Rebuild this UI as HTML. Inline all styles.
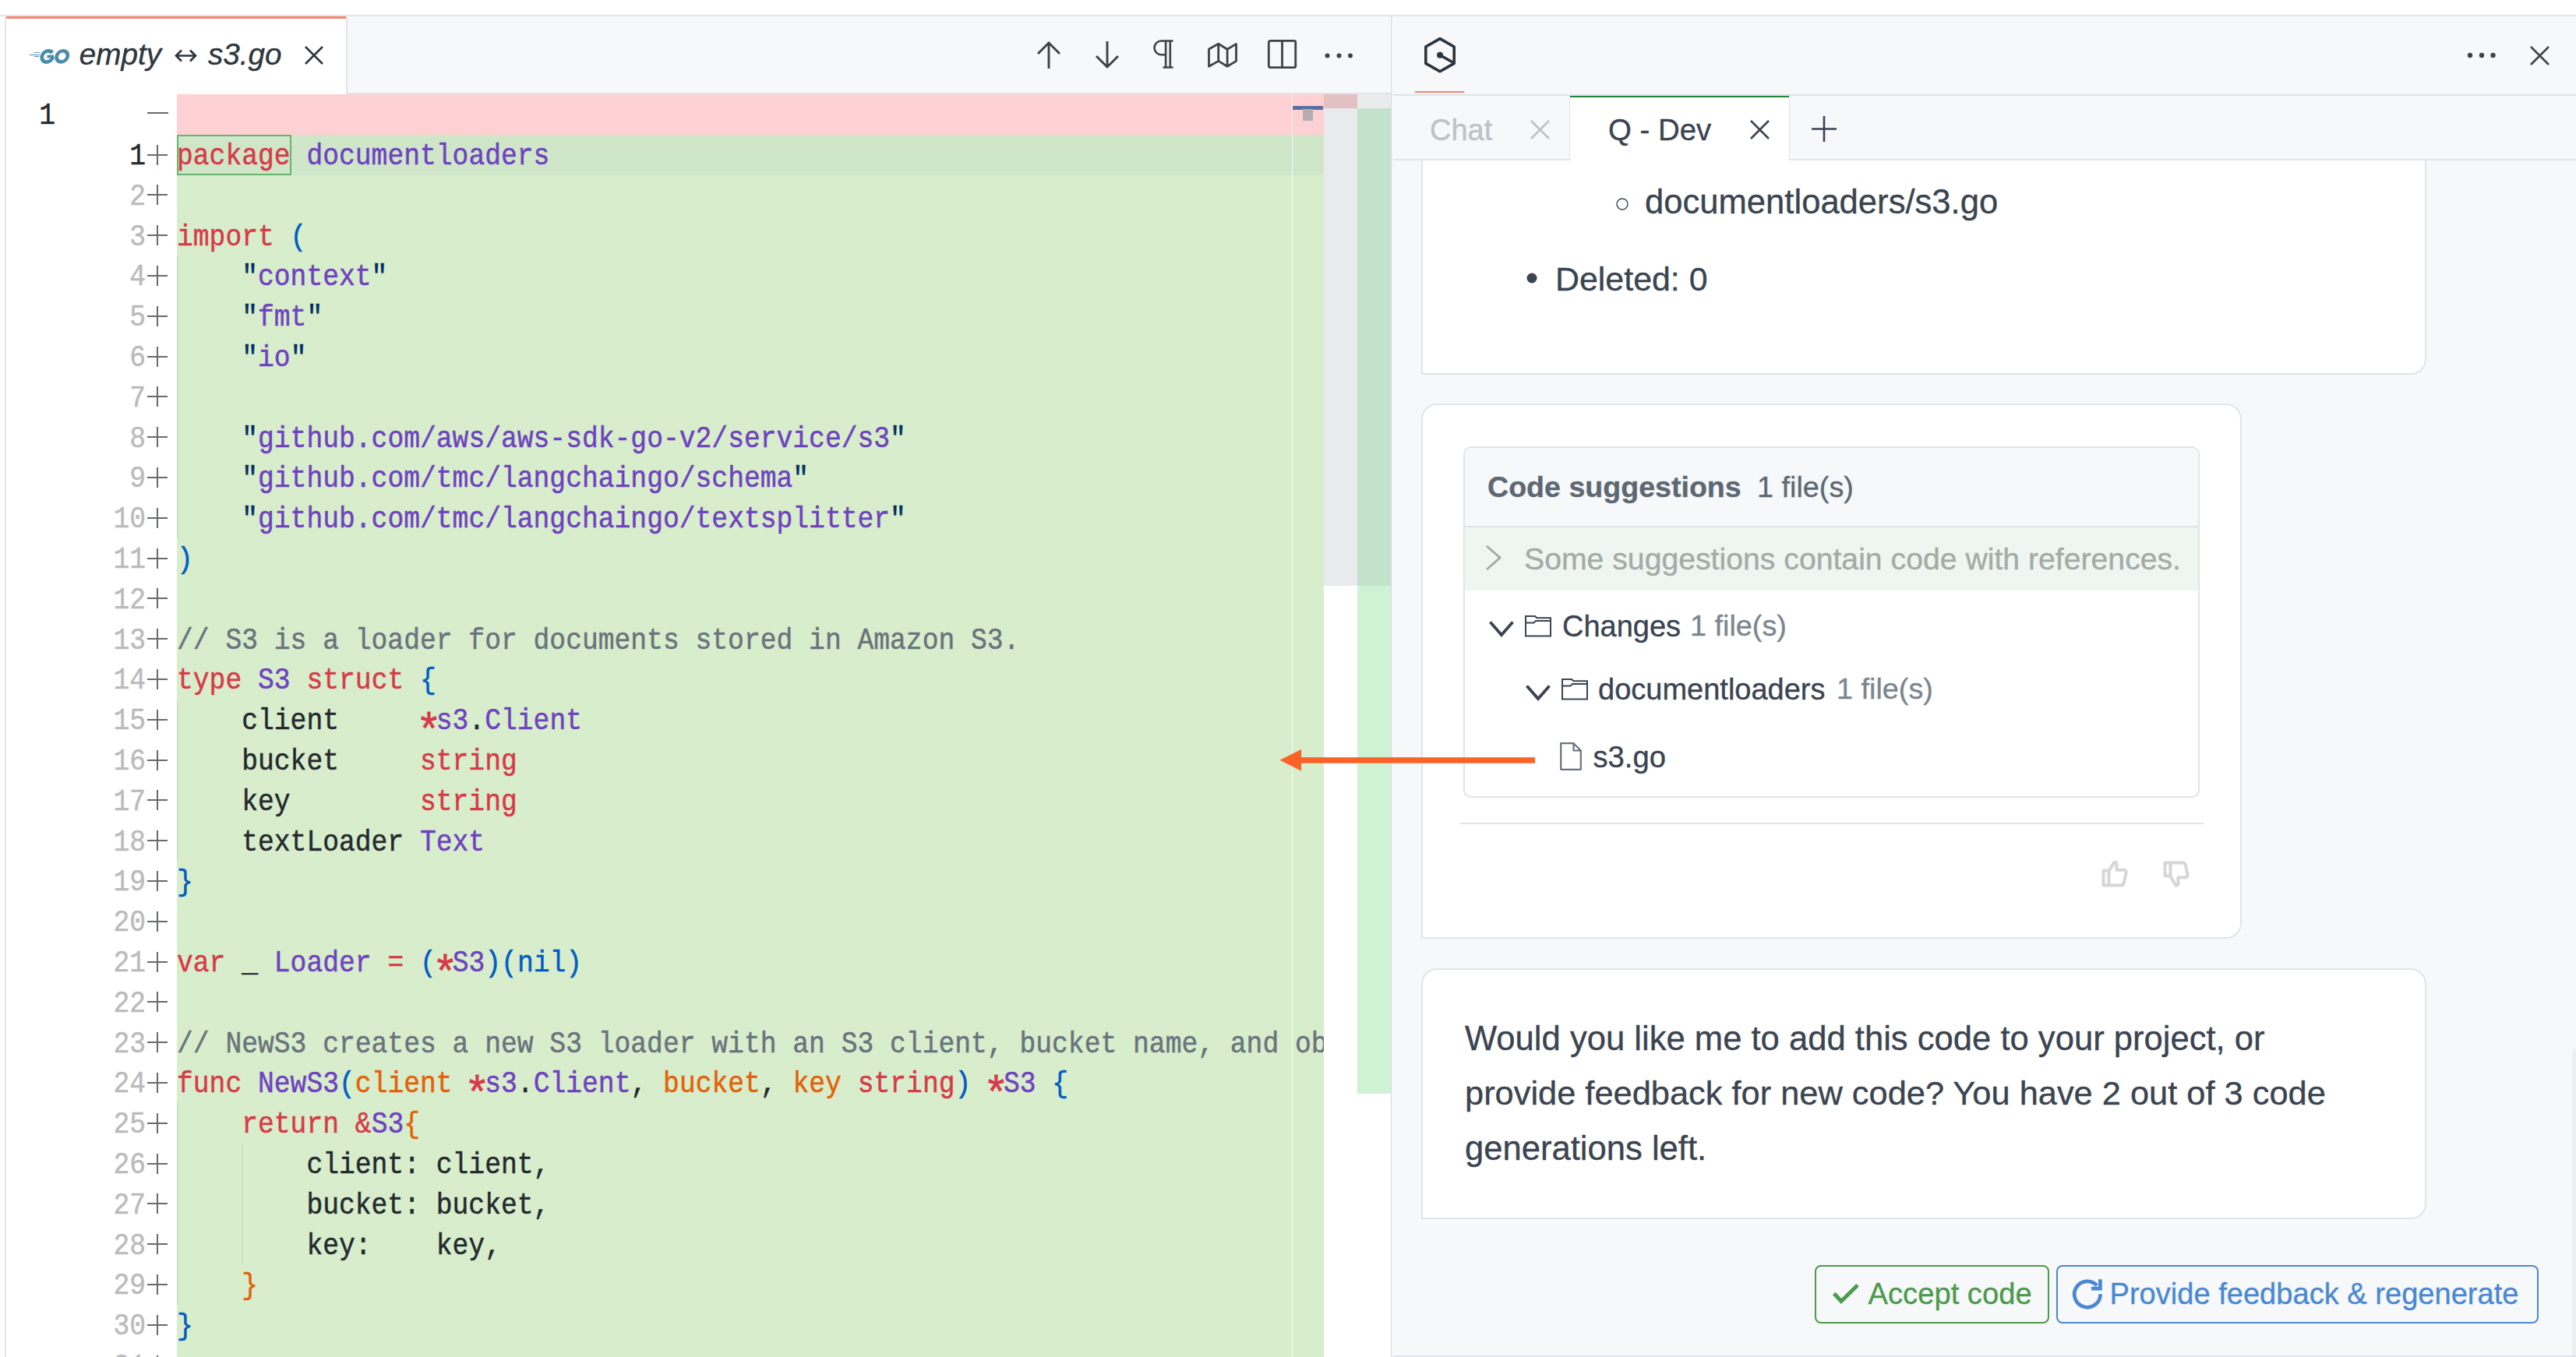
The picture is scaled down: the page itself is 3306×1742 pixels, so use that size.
<!DOCTYPE html>
<html><head><meta charset="utf-8">
<style>
*{box-sizing:border-box}
html,body{margin:0;padding:0}
body{width:3306px;height:1742px;position:relative;overflow:hidden;background:#fff;font-family:"Liberation Sans",sans-serif}
.a{position:absolute}
.cl{position:absolute;left:227px;height:51.8px;line-height:51.8px;font-family:"Liberation Mono",monospace;font-size:34.67px;white-space:pre;color:#24292e;-webkit-text-stroke:0.45px currentColor;transform-origin:0 35px;transform:translateY(3px) scaleY(1.1);}
.ln{position:absolute;height:51.8px;line-height:51.8px;font-family:"Liberation Mono",monospace;font-size:34.67px;white-space:pre;-webkit-text-stroke:0.45px currentColor;transform-origin:0 35px;transform:translateY(3px) scaleY(1.1);}
.t{position:absolute;white-space:pre;line-height:1;-webkit-text-stroke:0.35px currentColor}
.ast{display:inline-block;transform:translate(1px,14px) scale(1.6,1.55)}
svg{position:absolute;overflow:visible}
</style></head><body>

<div class="a" style="left:0;top:19px;width:3306px;height:2px;background:#e1e4e8"></div>
<div class="a" style="left:6px;top:20px;width:2px;height:1722px;background:#e1e4e8"></div>
<div class="a" style="left:8px;top:21px;width:1778px;height:100px;background:#f6f8fa"></div>
<div class="a" style="left:444px;top:119px;width:1342px;height:2px;background:#e1e4e8"></div>
<div class="a" style="left:8px;top:21px;width:436px;height:100px;background:#fff"></div>
<div class="a" style="left:8px;top:21px;width:436px;height:3px;background:#f9826c"></div>
<div class="a" style="left:444px;top:21px;width:2px;height:100px;background:#e1e4e8"></div>
<div class="a" style="left:42.5px;top:67.3px;width:9px;height:1.2px;background:#4a8baa;opacity:.75"></div><div class="a" style="left:38px;top:69.8px;width:13px;height:1.6px;background:#4a8baa"></div><div class="a" style="left:44.3px;top:72px;width:5.7px;height:1.2px;background:#4a8baa"></div>
<svg style="left:38px;top:62px" width="52" height="21" viewBox="0 0 52 21"><g transform="translate(32 10.4) skewX(-10) translate(-32 -10.4)" fill="none" stroke="#4a8baa" stroke-width="4.6"><path d="M28.3 5.8A7.1 7.1 0 1 0 30 11.2"/><circle cx="41.7" cy="10.4" r="7.1"/></g><rect x="22.5" y="8.6" width="8.6" height="3.8" fill="#4a8baa"/></svg>
<div class="t" style="left:101.8px;top:51.2px;font-size:38.7px;color:#2f363d;font-style:italic;">empty</div>
<div class="t" style="left:267.0px;top:51.2px;font-size:38.7px;color:#2f363d;font-style:italic;">s3.go</div>
<svg style="left:224px;top:63px" width="29" height="17" viewBox="0 0 29 17" fill="none" stroke="#2f363d" stroke-width="2.7"><path d="M2 8.5H27M9 1.5L2 8.5L9 15.5M20 1.5L27 8.5L20 15.5"/></svg>
<svg style="left:391px;top:59px" width="24" height="24" viewBox="0 0 24 24"><path d="M1 1L23 23M23 1L1 23" stroke="#2f363d" stroke-width="2.6"/></svg>
<svg style="left:1331px;top:53px" width="30" height="35" viewBox="0 0 30 35" fill="none" stroke="#424242" stroke-width="2.9"><path d="M15 35V2M1 16L15 2L29 16"/></svg>
<svg style="left:1406px;top:53px" width="30" height="35" viewBox="0 0 30 35" fill="none" stroke="#424242" stroke-width="2.9"><path d="M15 0V33M1 19L15 33L29 19"/></svg>
<svg style="left:1480px;top:51px" width="26" height="37" viewBox="0 0 26 37" fill="none" stroke="#424242" stroke-width="2.6"><path d="M15 1.5H25.5M16.1 1.5V35.5M21.8 1.5V35.5M12.5 35.5H25.5M16.1 1.5H10.5C5.5 1.5 1.5 5.5 1.5 10.4S5.5 19.3 10.5 19.3H16.1"/></svg>
<svg style="left:1550px;top:55px" width="38" height="32" viewBox="0 0 38 32" fill="none" stroke="#424242" stroke-width="2.8" stroke-linejoin="round"><path d="M1.5 7.9L13.7 1.2L25.1 8.3L36.5 1.4V23.4L25.1 30.3L13.7 23.4L1.5 30.3Z M13.7 1.2V23.4 M25.1 8.3V30.3"/></svg>
<svg style="left:1627px;top:51px" width="37" height="37" viewBox="0 0 37 37" fill="none" stroke="#424242" stroke-width="2.8"><rect x="1.3" y="1.3" width="34.4" height="34.4" rx="2"/><path d="M18.5 1.3V35.7"/></svg>
<svg style="left:1700px;top:68px" width="38" height="7" viewBox="0 0 38 7" fill="#424242"><circle cx="3.5" cy="3.5" r="3"/><circle cx="18.5" cy="3.5" r="3"/><circle cx="33" cy="3.5" r="3"/></svg>
<div class="a" style="left:227px;top:121.2px;width:1472px;height:51.8px;background:#fdd1d3"></div>
<div class="a" style="left:227px;top:173.0px;width:1472px;height:1742px;background:#d7edcb"></div>
<div class="a" style="left:227px;top:173.0px;width:1472px;height:51.8px;background:#cfe7c8"></div>
<div class="a" style="left:227px;top:172.9px;width:147px;height:51.8px;border:2px solid #66b46e"></div>
<div class="a" style="left:227.0px;top:328.4px;width:2px;height:362.6px;background:rgba(0,0,0,.045)"></div>
<div class="a" style="left:227.0px;top:898.2px;width:2px;height:207.2px;background:rgba(0,0,0,.045)"></div>
<div class="a" style="left:227.0px;top:1416.2px;width:2px;height:259.0px;background:rgba(0,0,0,.045)"></div>
<div class="a" style="left:310.2px;top:1468.0px;width:2px;height:155.4px;background:rgba(0,0,0,.045)"></div>
<div class="ln" style="top:121.20px;left:40px;width:31px;color:#24292e;text-align:right">1</div>
<div class="a" style="left:189px;top:144.20px;width:27px;height:2px;background:#6a6a6a"></div>
<div class="ln" style="top:173.00px;left:100px;width:87px;color:#24292e;text-align:right">1</div>
<div class="a" style="left:189px;top:197.50px;width:26px;height:2px;background:#6a6a6a"></div>
<div class="a" style="left:201px;top:185.50px;width:2px;height:26px;background:#6a6a6a"></div>
<div class="ln" style="top:224.80px;left:100px;width:87px;color:#babbbd;text-align:right">2</div>
<div class="a" style="left:189px;top:249.30px;width:26px;height:2px;background:#6a6a6a"></div>
<div class="a" style="left:201px;top:237.30px;width:2px;height:26px;background:#6a6a6a"></div>
<div class="ln" style="top:276.60px;left:100px;width:87px;color:#babbbd;text-align:right">3</div>
<div class="a" style="left:189px;top:301.10px;width:26px;height:2px;background:#6a6a6a"></div>
<div class="a" style="left:201px;top:289.10px;width:2px;height:26px;background:#6a6a6a"></div>
<div class="ln" style="top:328.40px;left:100px;width:87px;color:#babbbd;text-align:right">4</div>
<div class="a" style="left:189px;top:352.90px;width:26px;height:2px;background:#6a6a6a"></div>
<div class="a" style="left:201px;top:340.90px;width:2px;height:26px;background:#6a6a6a"></div>
<div class="ln" style="top:380.20px;left:100px;width:87px;color:#babbbd;text-align:right">5</div>
<div class="a" style="left:189px;top:404.70px;width:26px;height:2px;background:#6a6a6a"></div>
<div class="a" style="left:201px;top:392.70px;width:2px;height:26px;background:#6a6a6a"></div>
<div class="ln" style="top:432.00px;left:100px;width:87px;color:#babbbd;text-align:right">6</div>
<div class="a" style="left:189px;top:456.50px;width:26px;height:2px;background:#6a6a6a"></div>
<div class="a" style="left:201px;top:444.50px;width:2px;height:26px;background:#6a6a6a"></div>
<div class="ln" style="top:483.80px;left:100px;width:87px;color:#babbbd;text-align:right">7</div>
<div class="a" style="left:189px;top:508.30px;width:26px;height:2px;background:#6a6a6a"></div>
<div class="a" style="left:201px;top:496.30px;width:2px;height:26px;background:#6a6a6a"></div>
<div class="ln" style="top:535.60px;left:100px;width:87px;color:#babbbd;text-align:right">8</div>
<div class="a" style="left:189px;top:560.10px;width:26px;height:2px;background:#6a6a6a"></div>
<div class="a" style="left:201px;top:548.10px;width:2px;height:26px;background:#6a6a6a"></div>
<div class="ln" style="top:587.40px;left:100px;width:87px;color:#babbbd;text-align:right">9</div>
<div class="a" style="left:189px;top:611.90px;width:26px;height:2px;background:#6a6a6a"></div>
<div class="a" style="left:201px;top:599.90px;width:2px;height:26px;background:#6a6a6a"></div>
<div class="ln" style="top:639.20px;left:100px;width:87px;color:#babbbd;text-align:right">10</div>
<div class="a" style="left:189px;top:663.70px;width:26px;height:2px;background:#6a6a6a"></div>
<div class="a" style="left:201px;top:651.70px;width:2px;height:26px;background:#6a6a6a"></div>
<div class="ln" style="top:691.00px;left:100px;width:87px;color:#babbbd;text-align:right">11</div>
<div class="a" style="left:189px;top:715.50px;width:26px;height:2px;background:#6a6a6a"></div>
<div class="a" style="left:201px;top:703.50px;width:2px;height:26px;background:#6a6a6a"></div>
<div class="ln" style="top:742.80px;left:100px;width:87px;color:#babbbd;text-align:right">12</div>
<div class="a" style="left:189px;top:767.30px;width:26px;height:2px;background:#6a6a6a"></div>
<div class="a" style="left:201px;top:755.30px;width:2px;height:26px;background:#6a6a6a"></div>
<div class="ln" style="top:794.60px;left:100px;width:87px;color:#babbbd;text-align:right">13</div>
<div class="a" style="left:189px;top:819.10px;width:26px;height:2px;background:#6a6a6a"></div>
<div class="a" style="left:201px;top:807.10px;width:2px;height:26px;background:#6a6a6a"></div>
<div class="ln" style="top:846.40px;left:100px;width:87px;color:#babbbd;text-align:right">14</div>
<div class="a" style="left:189px;top:870.90px;width:26px;height:2px;background:#6a6a6a"></div>
<div class="a" style="left:201px;top:858.90px;width:2px;height:26px;background:#6a6a6a"></div>
<div class="ln" style="top:898.20px;left:100px;width:87px;color:#babbbd;text-align:right">15</div>
<div class="a" style="left:189px;top:922.70px;width:26px;height:2px;background:#6a6a6a"></div>
<div class="a" style="left:201px;top:910.70px;width:2px;height:26px;background:#6a6a6a"></div>
<div class="ln" style="top:950.00px;left:100px;width:87px;color:#babbbd;text-align:right">16</div>
<div class="a" style="left:189px;top:974.50px;width:26px;height:2px;background:#6a6a6a"></div>
<div class="a" style="left:201px;top:962.50px;width:2px;height:26px;background:#6a6a6a"></div>
<div class="ln" style="top:1001.80px;left:100px;width:87px;color:#babbbd;text-align:right">17</div>
<div class="a" style="left:189px;top:1026.30px;width:26px;height:2px;background:#6a6a6a"></div>
<div class="a" style="left:201px;top:1014.30px;width:2px;height:26px;background:#6a6a6a"></div>
<div class="ln" style="top:1053.60px;left:100px;width:87px;color:#babbbd;text-align:right">18</div>
<div class="a" style="left:189px;top:1078.10px;width:26px;height:2px;background:#6a6a6a"></div>
<div class="a" style="left:201px;top:1066.10px;width:2px;height:26px;background:#6a6a6a"></div>
<div class="ln" style="top:1105.40px;left:100px;width:87px;color:#babbbd;text-align:right">19</div>
<div class="a" style="left:189px;top:1129.90px;width:26px;height:2px;background:#6a6a6a"></div>
<div class="a" style="left:201px;top:1117.90px;width:2px;height:26px;background:#6a6a6a"></div>
<div class="ln" style="top:1157.20px;left:100px;width:87px;color:#babbbd;text-align:right">20</div>
<div class="a" style="left:189px;top:1181.70px;width:26px;height:2px;background:#6a6a6a"></div>
<div class="a" style="left:201px;top:1169.70px;width:2px;height:26px;background:#6a6a6a"></div>
<div class="ln" style="top:1209.00px;left:100px;width:87px;color:#babbbd;text-align:right">21</div>
<div class="a" style="left:189px;top:1233.50px;width:26px;height:2px;background:#6a6a6a"></div>
<div class="a" style="left:201px;top:1221.50px;width:2px;height:26px;background:#6a6a6a"></div>
<div class="ln" style="top:1260.80px;left:100px;width:87px;color:#babbbd;text-align:right">22</div>
<div class="a" style="left:189px;top:1285.30px;width:26px;height:2px;background:#6a6a6a"></div>
<div class="a" style="left:201px;top:1273.30px;width:2px;height:26px;background:#6a6a6a"></div>
<div class="ln" style="top:1312.60px;left:100px;width:87px;color:#babbbd;text-align:right">23</div>
<div class="a" style="left:189px;top:1337.10px;width:26px;height:2px;background:#6a6a6a"></div>
<div class="a" style="left:201px;top:1325.10px;width:2px;height:26px;background:#6a6a6a"></div>
<div class="ln" style="top:1364.40px;left:100px;width:87px;color:#babbbd;text-align:right">24</div>
<div class="a" style="left:189px;top:1388.90px;width:26px;height:2px;background:#6a6a6a"></div>
<div class="a" style="left:201px;top:1376.90px;width:2px;height:26px;background:#6a6a6a"></div>
<div class="ln" style="top:1416.20px;left:100px;width:87px;color:#babbbd;text-align:right">25</div>
<div class="a" style="left:189px;top:1440.70px;width:26px;height:2px;background:#6a6a6a"></div>
<div class="a" style="left:201px;top:1428.70px;width:2px;height:26px;background:#6a6a6a"></div>
<div class="ln" style="top:1468.00px;left:100px;width:87px;color:#babbbd;text-align:right">26</div>
<div class="a" style="left:189px;top:1492.50px;width:26px;height:2px;background:#6a6a6a"></div>
<div class="a" style="left:201px;top:1480.50px;width:2px;height:26px;background:#6a6a6a"></div>
<div class="ln" style="top:1519.80px;left:100px;width:87px;color:#babbbd;text-align:right">27</div>
<div class="a" style="left:189px;top:1544.30px;width:26px;height:2px;background:#6a6a6a"></div>
<div class="a" style="left:201px;top:1532.30px;width:2px;height:26px;background:#6a6a6a"></div>
<div class="ln" style="top:1571.60px;left:100px;width:87px;color:#babbbd;text-align:right">28</div>
<div class="a" style="left:189px;top:1596.10px;width:26px;height:2px;background:#6a6a6a"></div>
<div class="a" style="left:201px;top:1584.10px;width:2px;height:26px;background:#6a6a6a"></div>
<div class="ln" style="top:1623.40px;left:100px;width:87px;color:#babbbd;text-align:right">29</div>
<div class="a" style="left:189px;top:1647.90px;width:26px;height:2px;background:#6a6a6a"></div>
<div class="a" style="left:201px;top:1635.90px;width:2px;height:26px;background:#6a6a6a"></div>
<div class="ln" style="top:1675.20px;left:100px;width:87px;color:#babbbd;text-align:right">30</div>
<div class="a" style="left:189px;top:1699.70px;width:26px;height:2px;background:#6a6a6a"></div>
<div class="a" style="left:201px;top:1687.70px;width:2px;height:26px;background:#6a6a6a"></div>
<div class="ln" style="top:1727.00px;left:100px;width:87px;color:#babbbd;text-align:right">31</div>
<div class="a" style="left:189px;top:1751.50px;width:26px;height:2px;background:#6a6a6a"></div>
<div class="a" style="left:201px;top:1739.50px;width:2px;height:26px;background:#6a6a6a"></div>
<div class="a" style="left:0;top:0;width:1699px;height:1742px;overflow:hidden">
<div class="cl" style="top:173.00px"><span style="color:#d73a49">package</span> <span style="color:#6f42c1">documentloaders</span></div>
<div class="cl" style="top:224.80px"></div>
<div class="cl" style="top:276.60px"><span style="color:#d73a49">import</span> <span style="color:#005cc5">(</span></div>
<div class="cl" style="top:328.40px">    <span style="color:#032f62">&quot;</span><span style="color:#6f42c1">context</span><span style="color:#032f62">&quot;</span></div>
<div class="cl" style="top:380.20px">    <span style="color:#032f62">&quot;</span><span style="color:#6f42c1">fmt</span><span style="color:#032f62">&quot;</span></div>
<div class="cl" style="top:432.00px">    <span style="color:#032f62">&quot;</span><span style="color:#6f42c1">io</span><span style="color:#032f62">&quot;</span></div>
<div class="cl" style="top:483.80px"></div>
<div class="cl" style="top:535.60px">    <span style="color:#032f62">&quot;</span><span style="color:#6f42c1">github.com/aws/aws-sdk-go-v2/service/s3</span><span style="color:#032f62">&quot;</span></div>
<div class="cl" style="top:587.40px">    <span style="color:#032f62">&quot;</span><span style="color:#6f42c1">github.com/tmc/langchaingo/schema</span><span style="color:#032f62">&quot;</span></div>
<div class="cl" style="top:639.20px">    <span style="color:#032f62">&quot;</span><span style="color:#6f42c1">github.com/tmc/langchaingo/textsplitter</span><span style="color:#032f62">&quot;</span></div>
<div class="cl" style="top:691.00px"><span style="color:#005cc5">)</span></div>
<div class="cl" style="top:742.80px"></div>
<div class="cl" style="top:794.60px"><span style="color:#6a737d">// S3 is a loader for documents stored in Amazon S3.</span></div>
<div class="cl" style="top:846.40px"><span style="color:#d73a49">type</span> <span style="color:#6f42c1">S3</span> <span style="color:#d73a49">struct</span> <span style="color:#005cc5">{</span></div>
<div class="cl" style="top:898.20px"><span style="color:#24292e">    client     </span><span class="ast" style="color:#d73a49">*</span><span style="color:#6f42c1">s3</span><span style="color:#24292e">.</span><span style="color:#6f42c1">Client</span></div>
<div class="cl" style="top:950.00px"><span style="color:#24292e">    bucket     </span><span style="color:#d73a49">string</span></div>
<div class="cl" style="top:1001.80px"><span style="color:#24292e">    key        </span><span style="color:#d73a49">string</span></div>
<div class="cl" style="top:1053.60px"><span style="color:#24292e">    textLoader </span><span style="color:#6f42c1">Text</span></div>
<div class="cl" style="top:1105.40px"><span style="color:#005cc5">}</span></div>
<div class="cl" style="top:1157.20px"></div>
<div class="cl" style="top:1209.00px"><span style="color:#d73a49">var</span><span style="color:#24292e"> _ </span><span style="color:#6f42c1">Loader</span> <span style="color:#d73a49">=</span> <span style="color:#005cc5">(</span><span class="ast" style="color:#d73a49">*</span><span style="color:#6f42c1">S3</span><span style="color:#005cc5">)(nil)</span></div>
<div class="cl" style="top:1260.80px"></div>
<div class="cl" style="top:1312.60px"><span style="color:#6a737d">// NewS3 creates a new S3 loader with an S3 client, bucket name, and object key.</span></div>
<div class="cl" style="top:1364.40px"><span style="color:#d73a49">func</span> <span style="color:#6f42c1">NewS3</span><span style="color:#005cc5">(</span><span style="color:#e36209">client</span> <span class="ast" style="color:#d73a49">*</span><span style="color:#6f42c1">s3</span><span style="color:#24292e">.</span><span style="color:#6f42c1">Client</span><span style="color:#24292e">, </span><span style="color:#e36209">bucket</span><span style="color:#24292e">, </span><span style="color:#e36209">key</span> <span style="color:#d73a49">string</span><span style="color:#005cc5">)</span> <span class="ast" style="color:#d73a49">*</span><span style="color:#6f42c1">S3</span> <span style="color:#005cc5">{</span></div>
<div class="cl" style="top:1416.20px">    <span style="color:#d73a49">return</span> <span style="color:#d73a49">&amp;</span><span style="color:#6f42c1">S3</span><span style="color:#e36209">{</span></div>
<div class="cl" style="top:1468.00px"><span style="color:#24292e">        client: client,</span></div>
<div class="cl" style="top:1519.80px"><span style="color:#24292e">        bucket: bucket,</span></div>
<div class="cl" style="top:1571.60px"><span style="color:#24292e">        key:    key,</span></div>
<div class="cl" style="top:1623.40px">    <span style="color:#e36209">}</span></div>
<div class="cl" style="top:1675.20px"><span style="color:#005cc5">}</span></div>
<div class="cl" style="top:1727.00px"></div>
</div>
<div class="a" style="left:1658px;top:121px;width:1px;height:1621px;background:rgba(255,255,255,.75)"></div>
<div class="a" style="left:1659px;top:136px;width:39px;height:5px;background:#5a70a2"></div>
<div class="a" style="left:1672px;top:140px;width:13px;height:15px;background:#b5aeae"></div>
<div class="a" style="left:1699px;top:121px;width:43px;height:631px;background:#e9eaec"></div>
<div class="a" style="left:1699px;top:121px;width:43px;height:18px;background:#e2c1c4"></div>
<div class="a" style="left:1742px;top:121px;width:43px;height:18px;background:#e9eaec"></div>
<div class="a" style="left:1742px;top:139px;width:43px;height:613px;background:#c3e1cb"></div>
<div class="a" style="left:1742px;top:752px;width:43px;height:652px;background:#cff2d4"></div>
<div class="a" style="left:1785px;top:20px;width:2px;height:1722px;background:#e1e4e8"></div>
<div class="a" style="left:1788px;top:21px;width:1518px;height:1721px;background:#f6f8fa"></div>
<div class="a" style="left:1788px;top:121px;width:1518px;height:2px;background:#e1e4e8"></div>
<svg style="left:1826px;top:46px" width="44" height="50" viewBox="0 0 44 50" fill="none" stroke="#2b333b" stroke-width="3.6" stroke-linejoin="round">
<path d="M22 3.6L40.2 14V35.4L22 45.8L3.8 35.4V14Z"/><path d="M22 24.8L38.5 34"/><circle cx="22" cy="24.8" r="2.2" fill="#2b333b"/></svg>
<div class="a" style="left:1816px;top:117px;width:63px;height:2px;background:#f9826c"></div>
<svg style="left:3166px;top:67px" width="38" height="8" viewBox="0 0 38 8" fill="#424242"><circle cx="4" cy="4" r="3.2"/><circle cx="19" cy="4" r="3.2"/><circle cx="33.5" cy="4" r="3.2"/></svg>
<svg style="left:3247px;top:59px" width="25" height="25" viewBox="0 0 25 25"><path d="M1 1L24 24M24 1L1 24" stroke="#424242" stroke-width="2.6"/></svg>
<!-- tabs -->
<div class="a" style="left:1788px;top:204px;width:1518px;height:2px;background:#e1e4e8"></div>
<div class="a" style="left:2015px;top:123px;width:282px;height:83px;background:#fff"></div>
<div class="a" style="left:2015px;top:123px;width:282px;height:2px;background:#22863a"></div>
<div class="a" style="left:2296px;top:123px;width:1px;height:83px;background:#e1e4e8"></div>
<div class="a" style="left:2014px;top:123px;width:1px;height:83px;background:#e1e4e8"></div>
<div class="t" style="left:1835.0px;top:147.8px;font-size:38px;color:#bfc1c4;">Chat</div>
<svg style="left:1964px;top:155px" width="25" height="23" viewBox="0 0 25 23"><path d="M1 0L24 23M24 0L1 23" stroke="#bfc1c4" stroke-width="2.6"/></svg>
<div class="t" style="left:2064.0px;top:147.5px;font-size:38.4px;color:#3b4450;">Q - Dev</div>
<svg style="left:2246px;top:155px" width="25" height="23" viewBox="0 0 25 23"><path d="M1 0L24 23M24 0L1 23" stroke="#3b4450" stroke-width="2.6"/></svg>
<svg style="left:2325px;top:149px" width="32" height="33" viewBox="0 0 32 33"><path d="M0 16.5H32M16 0V33" stroke="#3b4450" stroke-width="2.6"/></svg>
<div class="a" style="left:1788px;top:206px;width:1518px;height:1536px;overflow:hidden">
<div class="a" style="left:36px;top:-106px;width:1290px;height:381px;background:#fff;border:2px solid #e1e4e8;border-radius:20px 20px 20px 0"></div>
<div class="a" style="left:36px;top:312px;width:1053px;height:687px;background:#fff;border:2px solid #e1e4e8;border-radius:20px 20px 20px 0"></div>
<div class="a" style="left:36px;top:1037px;width:1290px;height:322px;background:#fff;border:2px solid #e1e4e8;border-radius:20px 20px 20px 0"></div>
</div>
<div class="a" style="left:0;top:0;width:3306px;height:1742px;" id="ov">
<svg style="left:2073px;top:253px" width="18" height="18" viewBox="0 0 18 18"><circle cx="9" cy="9" r="7" fill="none" stroke="#3b4450" stroke-width="1.4"/></svg>
<div class="t" style="left:2111.0px;top:237.6px;font-size:43.6px;color:#3b4450;">documentloaders/s3.go</div>
<svg style="left:1958px;top:349px" width="16" height="16" viewBox="0 0 16 16"><circle cx="8" cy="8" r="6.5" fill="#3b4450"/></svg>
<div class="t" style="left:1996.0px;top:336.7px;font-size:42.9px;color:#3b4450;">Deleted: 0</div>
<div class="a" style="left:1878px;top:573px;width:945px;height:451px;background:#fff;border:2px solid #e1e4e8;border-radius:10px;overflow:hidden"><div class="a" style="left:0;top:0;width:941px;height:102px;background:#f6f8fa;border-bottom:2px solid #e1e4e8"></div><div class="a" style="left:0;top:102px;width:941px;height:81px;background:#eff5f1"></div></div>
<div class="t" style="left:1909.0px;top:607.2px;font-size:37.6px;color:#5e6873;font-weight:bold;">Code suggestions</div>
<div class="t" style="left:2255.0px;top:607.0px;font-size:37.8px;color:#5e6873;">1 file(s)</div>
<svg style="left:1906px;top:699px" width="22" height="34" viewBox="0 0 22 34"><path d="M2 2L19 17L2 32" fill="none" stroke="#a3aba5" stroke-width="3"/></svg>
<div class="t" style="left:1956.0px;top:698.3px;font-size:39.2px;color:#a3aba5;">Some suggestions contain code with references.</div>
<svg style="left:1911px;top:797px" width="32" height="21" viewBox="0 0 32 21"><path d="M1.5 1.5L16 18L30.5 1.5" fill="none" stroke="#3b4450" stroke-width="3.8"/></svg>
<svg style="left:1957px;top:790px" width="34" height="28" viewBox="0 0 34 28"><path d="M1 1H13L15.5 3.3H33V26.5H1Z M1 9.5H11.5L14 7H33" fill="none" stroke="#3b4450" stroke-width="2" stroke-linejoin="miter"/></svg>
<div class="t" style="left:2005.0px;top:784.8px;font-size:38px;color:#3b4450;">Changes</div>
<div class="t" style="left:2169.0px;top:785.0px;font-size:37.8px;color:#7d858d;">1 file(s)</div>
<svg style="left:1958px;top:879px" width="32" height="21" viewBox="0 0 32 21"><path d="M1.5 1.5L16 18L30.5 1.5" fill="none" stroke="#3b4450" stroke-width="3.8"/></svg>
<svg style="left:2004px;top:871px" width="34" height="28" viewBox="0 0 34 28"><path d="M1 1H13L15.5 3.3H33V26.5H1Z M1 9.5H11.5L14 7H33" fill="none" stroke="#3b4450" stroke-width="2" stroke-linejoin="miter"/></svg>
<div class="t" style="left:2051.0px;top:865.8px;font-size:38px;color:#3b4450;">documentloaders</div>
<div class="t" style="left:2357.0px;top:866.0px;font-size:37.8px;color:#7d858d;">1 file(s)</div>
<svg style="left:2002px;top:953px" width="28" height="36" viewBox="0 0 28 36"><path d="M1.2 1.2H17.5L26.8 10.5V34.8H1.2Z M17.5 1.2V10.5H26.8" fill="none" stroke="#6a737d" stroke-width="2.2" stroke-linejoin="round"/></svg>
<div class="t" style="left:2044.5px;top:952.6px;font-size:38.2px;color:#3b4450;">s3.go</div>
<div class="a" style="left:1873px;top:1056px;width:955px;height:2px;background:#e1e4e8"></div>
<svg style="left:2697px;top:1105px" width="35" height="34" viewBox="0 0 35 34" fill="none" stroke="#d5d6d7" stroke-width="4" stroke-linejoin="round"><path d="M2.5 12.5H9.5V31.5H2.5Z M9.5 13L16 2.5C17.5 1 19.5 2 19.5 4V11.8H28.5C31 11.8 32 13.5 31.5 16L29 27.5C28.5 30 27 31.5 25 31.5H9.5"/></svg>
<svg style="left:2776px;top:1105px" width="35" height="34" viewBox="0 0 35 34" fill="none" stroke="#d5d6d7" stroke-width="4" stroke-linejoin="round"><path d="M2.5 2.5H9.5V19.5H2.5Z M9.5 20L16 31C17.5 32.5 19.5 31.5 19.5 29.5V21.5H28.5C31 21.5 32 19.8 31.5 17.5L29 6C28.5 3.5 27 2.5 25 2.5H9.5"/></svg>
<div class="t" style="left:1880.0px;top:1312.1px;font-size:43.6px;color:#3b4450;">Would you like me to add this code to your project, or</div>
<div class="t" style="left:1880.0px;top:1382.2px;font-size:43.4px;color:#3b4450;">provide feedback for new code? You have 2 out of 3 code</div>
<div class="t" style="left:1880.0px;top:1453.1px;font-size:43.6px;color:#3b4450;">generations left.</div>
<div class="a" style="left:2329px;top:1624px;width:301px;height:75px;border:2px solid #4c9a4c;border-radius:8px"></div>
<svg style="left:2352px;top:1648px" width="34" height="27" viewBox="0 0 34 27"><path d="M1.8 12.5L11 22.5L32 1.8" fill="none" stroke="#4c9a4c" stroke-width="5"/></svg>
<div class="t" style="left:2397.5px;top:1641.6px;font-size:38.2px;color:#4c9a4c;">Accept code</div>
<div class="a" style="left:2639px;top:1624px;width:619px;height:75px;border:2px solid #4a88d2;border-radius:8px"></div>
<svg style="left:2660px;top:1642px" width="39" height="40" viewBox="0 0 39 40"><path d="M35.6 19.3A16.7 16.7 0 1 1 31.2 8.2" fill="none" stroke="#4a88d2" stroke-width="4.7"/><path d="M24 12.1H35.4V0.2" fill="none" stroke="#4a88d2" stroke-width="4.7"/></svg>
<div class="t" style="left:2707.5px;top:1641.7px;font-size:38.1px;color:#4a88d2;">Provide feedback &amp; regenerate</div>
<svg style="left:1642px;top:961px" width="330" height="30" viewBox="0 0 330 30"><path d="M0.5 14.8L28 1V28.8Z" fill="#fb6228"/><rect x="27" y="11.2" width="301" height="7.5" fill="#fb6228"/></svg>
</div>
<div class="a" style="left:1788px;top:1740px;width:1518px;height:2px;background:#e1e4e8"></div>
<div class="a" style="left:3301px;top:1347px;width:5px;height:393px;background:#eceef1;border-radius:3px 0 0 0"></div>
</body></html>
